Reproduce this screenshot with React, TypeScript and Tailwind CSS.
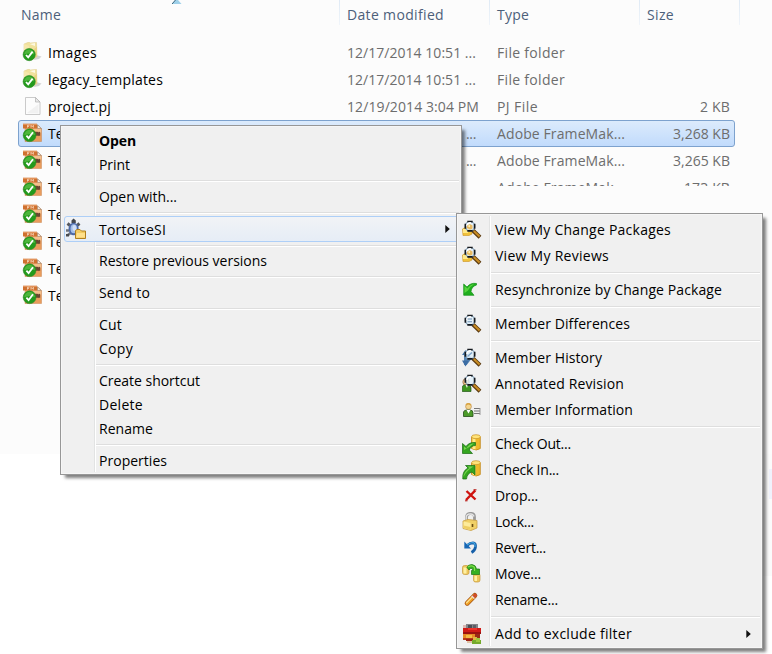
import { ReactNode, useLayoutEffect, useRef } from "react";

/* Text set to a given width by adjusting its tracking. */
function Label({ text, w, className = "" }: { text: string; w?: number; className?: string }) {
  const ref = useRef<HTMLSpanElement>(null);
  useLayoutEffect(() => {
    const el = ref.current;
    if (!el || !w) return;
    el.style.letterSpacing = "0px";
    const natural = el.getBoundingClientRect().width;
    el.style.letterSpacing = `${(w - natural) / text.length}px`;
  }, [text, w]);
  return (
    <span ref={ref} className={`inline-block whitespace-pre ${className}`}>
      {text}
    </span>
  );
}

function Check({ cx, cy, r }: { cx: number; cy: number; r: number }) {
  return (
    <g>
      <circle cx={cx} cy={cy} r={r} fill="#239a1c" stroke="#2b8a25" strokeWidth=".6" />
      <path d={`M${cx - r + 1} ${cy} a${r - 1} ${r - 1} 0 0 1 ${2 * r - 2} 0 q${-r + 1} -2 ${-2 * r + 2} 0z`} fill="#4db63c" />
      <path d={`M${cx - 3.2} ${cy + 0.4} L${cx - 1} ${cy + 2.8} L${cx + 3.4} ${cy - 3}`} fill="none" stroke="#fff" strokeWidth="1.8" />
    </g>
  );
}

function FolderIcon() {
  return (
    <svg width="20" height="20" viewBox="0 0 20 20">
      <path d="M14 13 L19.500 14.500 L17 17 L12 18z" fill="#d3d3d3" />
      <path d="M2 2 L7 0 L8 1 L14.500 .5 L15 14.500 L9 18 L2 14z" fill="#f1e19d" stroke="#dccb86" strokeWidth=".5" />
      <path d="M2 2 L7 4 V18 L2 14z" fill="#f6e7ab" />
      <path d="M7.500 2 L13 1 V4z" fill="#fdf9e2" />
      <path d="M11 8 L15 4.500 V14.500 L10 18z" fill="#e8d384" />
      <Check cx={7.2} cy={12.6} r={6.1} />
    </svg>
  );
}

function PageIcon() {
  return (
    <svg width="20" height="20" viewBox="0 0 20 20">
      <path d="M3.500 1.500 H13.500 L18 6 V18.500 H3.500z" fill="#fcfcfc" stroke="#bcbcbc" strokeWidth=".8" />
      <path d="M5 17 L16.500 8 V17.500z" fill="#f1f1f1" />
      <path d="M13.500 1.500 V6 H18z" fill="#e8e8e8" stroke="#b0b0b0" strokeWidth=".7" />
    </svg>
  );
}

function FrameIcon() {
  return (
    <svg width="20" height="20" viewBox="0 0 20 20">
      <path d="M3 2 H15.500 L19.500 5.500 V18.500 H3z" fill="#e99c5c" stroke="#bd733b" strokeWidth=".4" />
      <path d="M3.500 5.500 H19 V9.500 L10 14 H3.500z" fill="#f5bf8b" />
      <path d="M15.500 1.800 V5.500 H19.300z" fill="#f8eadb" stroke="#8c7561" strokeWidth=".5" />
      <path d="M1 .8 H15 V5.500 H1z" fill="#cf7130" />
      <path d="M1 .8 H15 V2 H1z" fill="#e2935a" />
      <path d="M5.500 4.600 V2.200 H7.500 M5.500 3.400 H7 M9 4.600 V2.300 L10.200 3.700 L11.400 2.300 V4.600" stroke="#fbdcc0" strokeWidth=".8" fill="none" />
      <path d="M13 12.800 V9.500 H14.500 V12.800 M15.500 12.800 V9 L16.500 11.500 L17.500 9 V12.800" stroke="#6b4630" strokeWidth="1.300" fill="none" />
      <Check cx={7.600} cy={12.200} r={6.400} />
    </svg>
  );
}

function TurtleIcon() {
  return (
    <svg width="22" height="22" viewBox="0 0 22 22">
      <path d="M2.500 5.500 L5 7.500 M14.500 5.500 L12 7.500" stroke="#55585e" strokeWidth="3" />
      <path d="M1 12.500 H4 M3 17 L5.500 15" stroke="#70747c" strokeWidth="2.600" />
      <path d="M6.500 2.500 L8.600 .5 L10.800 2.500 V5 H6.500z" fill="#44474c" />
      <ellipse cx="8.600" cy="11" rx="5" ry="6.300" fill="#4b68a6" />
      <ellipse cx="8.800" cy="10.800" rx="3.300" ry="4.500" fill="#a2bee9" />
      <ellipse cx="9.300" cy="10" rx="1.800" ry="3" fill="#d2e0f6" />
      <rect x="1" y="16" width="3" height="2.500" fill="#484b50" />
      <path d="M10.500 20.500 V12.500 L12 11.500 H15 L16.500 13 H20.500 V20.500z" fill="#f2cb61" stroke="#b07f1e" />
      <path d="M11 19.500 L12 15 H20 V19.500z" fill="#ffe08b" />
    </svg>
  );
}

function Lens() {
  return (
    <g>
      <path d="M11 10.500 L18 17.200" stroke="#5b3a10" strokeWidth="4" />
      <path d="M11.800 11 L17.600 16.500" stroke="#c98d24" strokeWidth="2" />
      <circle cx="8" cy="6.300" r="4.800" fill="#dff0fa" fillOpacity=".78" stroke="#8cabc4" strokeWidth="1.200" />
      <path d="M5.300 1.700 H10.700 M12.600 3.800 V8.800 M10.700 10.900 H5.300 M3.400 8.800 V3.800" fill="none" stroke="#15191e" strokeWidth="1.700" />
      <path d="M5 6 A3 3 0 0 1 9 3" stroke="#fff" strokeWidth="1.500" fill="none" />
    </g>
  );
}

const Svg = ({ children }: { children: ReactNode }) => (
  <svg width="20" height="20" viewBox="0 0 20 20">
    {children}
  </svg>
);

function PackagesIcon() {
  return (
    <Svg>
      <path d="M.5 9 L3 7.500 H9 L10 10 V14 L7 15.500 H1z" fill="#f0c13a" stroke="#d09c30" strokeWidth=".7" />
      <path d="M1 9 H6 V13 H1z" fill="#ffe887" />
      <Lens />
      <path d="M5 5.500 L8 4 L10.500 5.500 V8.500 L8 9.500 L5 8z" fill="#ecaa34" fillOpacity=".75" />
      <path d="M5.500 6 L8 4.800 V7.500z" fill="#fff2b2" />
    </Svg>
  );
}

function DiffIcon() {
  return (
    <Svg>
      <Lens />
      <path d="M5.500 5 H10 M5.500 7.800 H10" stroke="#7192b4" strokeWidth="1.100" />
    </Svg>
  );
}

function HistoryIcon() {
  return (
    <Svg>
      <path d="M3.500 5 V17 M3.500 16 L9 9" stroke="#5786b5" strokeWidth="3" fill="none" />
      <path d="M0 7 L3.500 2 L6 7z" fill="#4778ab" />
      <path d="M0 12.500 L3.500 18.500 L7 12.500z" fill="#3c6da4" />
      <Lens />
      <path d="M5.500 8.500 L10 4.500" stroke="#7da4ca" strokeWidth="1.500" />
    </Svg>
  );
}

function AnnotatedIcon() {
  return (
    <Svg>
      <circle cx="4" cy="8" r="3.200" fill="#efc28a" stroke="#79502d" strokeWidth=".6" />
      <path d="M.3 17.500 V13 Q.5 11 3 11 H6 Q9 11 9 14 V17.500z" fill="#3d941f" stroke="#235815" strokeWidth=".7" />
      <path d="M3.500 11 L5 14 L6 11z" fill="#eef5e8" />
      <Lens />
    </Svg>
  );
}

function InfoIcon() {
  return (
    <Svg>
      <circle cx="6.500" cy="6.500" r="2.900" fill="#f4d58e" stroke="#bd8d4f" strokeWidth=".7" />
      <path d="M4 5 Q6 2.500 9 5" stroke="#d8a342" strokeWidth="1.300" fill="none" />
      <path d="M1.500 16.500 V12 Q2 10 5 10 H8 Q11 10 11 13 V16.500z" fill="#4c9b2a" stroke="#244e18" strokeWidth=".8" />
      <path d="M4.500 10 L6.500 13.500 L8.500 10z" fill="#fff" />
      <path d="M12 8.500 H18 M12 11 H18 M12 13.500 H18" stroke="#777" strokeWidth="1.200" />
      <path d="M18 8 V15" stroke="#999" strokeWidth="1" />
    </Svg>
  );
}

const Cylinder = () => (
  <g>
    <path d="M9.500 3 V14.500 Q14.500 17.500 18.300 14.500 V3z" fill="#efb92b" stroke="#c0861d" strokeWidth=".8" />
    <path d="M10.500 3 H13.500 V15.500 L10.500 14.800z" fill="#ffe98a" />
    <ellipse cx="14" cy="2.700" rx="4.400" ry="2" fill="#ffe37a" stroke="#c98f1c" strokeWidth=".7" />
  </g>
);

function CheckOutIcon() {
  return (
    <Svg>
      <Cylinder />
      <path d="M13.500 8.500 Q7 8 4 12.500 L.5 9.500 V19.500 H10.500 L7.300 16 Q9 11.500 13.500 11.500z" fill="#34a51f" stroke="#176b10" strokeWidth=".7" />
      <path d="M12 9.200 Q7 9.500 4.500 14.500 L2 12.500 V16 Q7 14 12 9.200z" fill="#76d44d" />
    </Svg>
  );
}

function CheckInIcon() {
  return (
    <Svg>
      <Cylinder />
      <path d="M.8 19 Q0 11 6 8 L3.500 5.500 H13 V15 L10 12 Q5 13.500 4.500 19z" fill="#34a51f" stroke="#176b10" strokeWidth=".7" />
      <path d="M1.500 17 Q1.500 12 7.500 8 L5.500 6.500 H11.500 Q4 11 1.500 17z" fill="#76d44d" />
    </Svg>
  );
}

function ResyncIcon() {
  return (
    <Svg>
      <path d="M14.500 3.500 Q8.500 2.500 5 7 L1.700 4 V15.300 H12 L9 11.500 Q9.500 6.500 14.500 5z" fill="#1fae1e" stroke="#149018" strokeWidth=".7" />
      <path d="M2.500 6 L5.500 8.500 Q8 4.500 12 4.300 Q8 6.500 6 10.500 L2.500 13z" fill="#58d43e" />
    </Svg>
  );
}

function DropIcon() {
  return (
    <Svg>
      <path d="M4.500 5 L13.500 13.500 M13.300 4.300 L4 14" stroke="#cf1410" strokeWidth="2.400" />
      <path d="M11.500 3.800 H14.500 M3 14.800 H5.500" stroke="#b5100c" strokeWidth="1" />
    </Svg>
  );
}

function LockIcon() {
  return (
    <Svg>
      <path d="M4.500 11 V5 Q4.700 1.500 8.700 1.300 Q12.500 1.500 12.500 5 V11" stroke="#999" strokeWidth="2.800" fill="none" />
      <path d="M4.200 10 V5 Q4.500 2 8.500 1.800 Q11.500 2 12 4.500" stroke="#e6e6e6" strokeWidth="1.300" fill="none" />
      <path d="M1 9 L6 7.500 L15 8.500 V16 L9 18.500 L1 16.500z" fill="#f0d066" stroke="#c9a047" strokeWidth=".8" />
      <path d="M1.500 9.500 L8.500 11 V18 L1.500 16z" fill="#fdeb9b" />
      <path d="M1.500 13.500 L8.500 15 V18 L1.500 16z" fill="#efce62" />
      <path d="M10.500 12 V15" stroke="#6b4d15" strokeWidth="1.600" />
    </Svg>
  );
}

function RevertIcon() {
  return (
    <Svg>
      <path d="M2.300 3.500 V10.500 H9z" fill="#1767b6" />
      <path d="M5 7.500 Q8 4.800 11 4.800 Q14 5 13.500 9 Q13 12.500 9.500 14.500" stroke="#1760a9" strokeWidth="2.700" fill="none" />
      <path d="M5 7 Q8 4.500 11 4.500 Q13.500 5 13 9" stroke="#48a9e4" strokeWidth="1.100" fill="none" />
    </Svg>
  );
}

function MoveIcon() {
  return (
    <Svg>
      <rect x=".5" y="1.500" width="6.500" height="9" rx="2" fill="#edc65b" stroke="#c79a3a" strokeWidth=".7" />
      <path d="M1.500 3.500 H4.500 V9.500 H1.500z" fill="#fff0a2" />
      <rect x="11.500" y="9.500" width="6.500" height="8.500" rx="2" fill="#edc65b" stroke="#c79a3a" strokeWidth=".7" />
      <path d="M12.500 12 H15 V17 H12.500z" fill="#fff0a2" />
      <path d="M5 3.500 Q6 .5 10 .5 Q14 1 14.500 5 H17.500 V10.500 H9.500 V6.500 H11 Q10.500 3.500 8.500 4.500 L7 6z" fill="#35b020" stroke="#187411" strokeWidth=".7" />
      <path d="M6 3 Q10 .5 12.500 3.500 V7" stroke="#83de4c" strokeWidth="1.200" fill="none" />
    </Svg>
  );
}

function RenameIcon() {
  return (
    <Svg>
      <path d="M5.200 13.200 L12.800 5.500" stroke="#a85512" strokeWidth="5" strokeLinecap="round" />
      <path d="M5.200 13.200 L12.800 5.500" stroke="#efa026" strokeWidth="3.400" strokeLinecap="round" />
      <path d="M4.600 12.700 L10.500 6.800" stroke="#ffe08b" strokeWidth="1.400" strokeLinecap="round" />
      <path d="M12.500 6 L13.300 5.300" stroke="#cf4a2c" strokeWidth="3.200" strokeLinecap="round" />
      <path d="M9.700 5.800 L12.400 8.700" stroke="#e8dde6" strokeWidth="1.200" />
    </Svg>
  );
}

function ExcludeIcon() {
  return (
    <svg width="20" height="20" viewBox="0 0 20 20" shapeRendering="crispEdges">
      <rect x="4" y="0" width="12" height="5" fill="#85858a" />
      <rect x="6" y="1" width="4" height="3" fill="#4b4e55" />
      <rect x="11" y="1" width="3" height="3" fill="#5c5f66" />
      <rect x="1" y="1" width="3" height="4" fill="#d9b8b2" />
      <rect x="1" y="4" width="18" height="6" fill="#d01b17" />
      <rect x="6" y="4" width="9" height="2" fill="#ee332a" />
      <rect x="1" y="8" width="18" height="2" fill="#9b1210" />
      <rect x="1" y="10" width="12" height="4" fill="#e68b24" />
      <rect x="4" y="11" width="6" height="3" fill="#f2bb46" />
      <rect x="13" y="10" width="5" height="4" fill="#982b17" />
      <rect x="1" y="14" width="10" height="2" fill="#b83a1a" />
      <rect x="4" y="15" width="7" height="2" fill="#9d2012" />
      <rect x="11" y="13" width="4" height="4" fill="#e0b342" />
      <rect x="5" y="17" width="5" height="2" fill="#e0c3a6" />
      <rect x="10" y="16" width="9" height="4" fill="#75aa2c" />
      <rect x="14" y="14" width="4" height="4" fill="#9cc83d" />
    </svg>
  );
}

const Arrow = () => (
  <svg width="5" height="8" viewBox="0 0 5 8">
    <path d="M.3 0 L4.800 4 L.3 8z" fill="#111" />
  </svg>
);

type Entry = { text: string; w: number; icon?: ReactNode; bold?: boolean; arrow?: boolean } | null;

const mainMenu: Entry[] = [
  { text: "Open", w: 37, bold: true },
  { text: "Print", w: 31 },
  null,
  { text: "Open with...", w: 78 },
  null,
  { text: "TortoiseSI", w: 67, icon: <TurtleIcon />, arrow: true },
  null,
  { text: "Restore previous versions", w: 168 },
  null,
  { text: "Send to", w: 51 },
  null,
  { text: "Cut", w: 23 },
  { text: "Copy", w: 34 },
  null,
  { text: "Create shortcut", w: 101 },
  { text: "Delete", w: 44 },
  { text: "Rename", w: 54 },
  null,
  { text: "Properties", w: 68 },
];

const subMenu: Entry[] = [
  { text: "View My Change Packages", w: 176, icon: <PackagesIcon /> },
  { text: "View My Reviews", w: 114, icon: <PackagesIcon /> },
  null,
  { text: "Resynchronize by Change Package", w: 227, icon: <ResyncIcon /> },
  null,
  { text: "Member Differences", w: 135, icon: <DiffIcon /> },
  null,
  { text: "Member History", w: 107, icon: <HistoryIcon /> },
  { text: "Annotated Revision", w: 129, icon: <AnnotatedIcon /> },
  { text: "Member Information", w: 138, icon: <InfoIcon /> },
  null,
  { text: "Check Out...", w: 76, icon: <CheckOutIcon /> },
  { text: "Check In...", w: 64, icon: <CheckInIcon /> },
  { text: "Drop...", w: 43, icon: <DropIcon /> },
  { text: "Lock...", w: 39, icon: <LockIcon /> },
  { text: "Revert...", w: 51, icon: <RevertIcon /> },
  { text: "Move...", w: 46, icon: <MoveIcon /> },
  { text: "Rename...", w: 63, icon: <RenameIcon /> },
  null,
  { text: "Add to exclude filter", w: 137, icon: <ExcludeIcon />, arrow: true },
];

const Separator = ({ className }: { className: string }) => (
  <div className={`flex items-center pr-0.5 ${className}`}>
    <div className="h-0.5 w-full border-t border-b border-t-[#dedede] border-b-white" />
  </div>
);

function MainMenu() {
  return (
    <div className="absolute left-[60px] top-[125px] w-[402px] h-[350px] border border-[#979797] bg-[#f0f0f0] shadow-[inset_0_0_0_1px_#f6f6f6,4px_4px_3px_-1px_rgba(0,0,0,0.5)]">
      <div className="flex h-full pt-[3px]">
        <div className="-mt-px mb-0.5 ml-0.5 w-[33px] border-r border-white">
          <div className="h-full border-r border-[#e2e3e3]" />
        </div>
        <div className="flex-1">
          {mainMenu.map((m, i) => {
            if (!m) return <Separator key={i} className={i === 4 || i === 6 ? "h-[7px]" : "h-2"} />;
            if (m.arrow)
              return (
                <div key={i} className="-ml-[32px] mr-0.5 flex h-[26px] items-center rounded-[3px] border border-[#aecff7] bg-linear-to-b from-[#f1f3f6] to-[#e6edf6]">
                  <div className="flex w-[34px]">{m.icon}</div>
                  <Label text={m.text} w={m.w} className="pt-px" />
                  <div className="ml-auto mr-[8px]">
                    <Arrow />
                  </div>
                </div>
              );
            return (
              <div key={i} className="flex h-6 items-center pl-[3px]">
                <Label text={m.text} w={m.w} className={m.bold ? "font-bold" : ""} />
              </div>
            );
          })}
        </div>
      </div>
    </div>
  );
}

function SubMenu() {
  return (
    <div className="absolute left-[456px] top-[213px] w-[307px] h-[436px] border border-[#979797] bg-[#f0f0f0] shadow-[inset_0_0_0_1px_#f6f6f6,4px_4px_3px_-1px_rgba(0,0,0,0.5)]">
      <div className="flex h-full pt-[3px]">
        <div className="-mt-px mb-0.5 ml-0.5 w-[32px] border-r border-white">
          <div className="h-full border-r border-[#e2e3e3]" />
        </div>
        <div className="flex-1">
          {subMenu.map((m, i) =>
            m ? (
              <div key={i} className="-ml-[29px] flex h-[26px] items-center">
                <div className="flex w-[33px]">{m.icon}</div>
                <Label text={m.text} w={m.w} />
                {m.arrow && (
                  <div className="ml-auto mr-[11px]">
                    <Arrow />
                  </div>
                )}
              </div>
            ) : (
              <Separator key={i} className="h-2" />
            ),
          )}
        </div>
      </div>
    </div>
  );
}

type FileRow = { icon: ReactNode; name: string; nw?: number; date?: string; dw?: number; type?: string; tw?: number; size?: string; sw?: number; state?: string };

const fm = { icon: <FrameIcon />, name: "Te" };
const files: FileRow[] = [
  { icon: <FolderIcon />, name: "Images", nw: 49, date: "12/17/2014 10:51 ...", dw: 129, type: "File folder", tw: 68 },
  { icon: <FolderIcon />, name: "legacy_templates", nw: 115, date: "12/17/2014 10:51 ...", dw: 129, type: "File folder", tw: 68 },
  { icon: <PageIcon />, name: "project.pj", nw: 63, date: "12/19/2014 3:04 PM", dw: 132, type: "PJ File", tw: 41, size: "2 KB", sw: 30 },
  { ...fm, date: "...", dw: 10, type: "Adobe FrameMak...", tw: 128, size: "3,268 KB", sw: 57, state: "selected" },
  { ...fm, date: "...", dw: 10, type: "Adobe FrameMak...", tw: 128, size: "3,265 KB", sw: 57 },
  { ...fm, type: "Adobe FrameMak...", tw: 128, size: "173 KB", sw: 46, state: "cut" },
  fm,
  fm,
  fm,
  fm,
];

function Row({ f }: { f: FileRow }) {
  const look = f.state === "selected" ? "border-[#7da2ce] bg-linear-to-b from-[#dcebfc] to-[#c1dbfc]" : "border-transparent";
  const clip = f.state === "cut" ? "h-[11px] overflow-hidden" : "h-[25px]";
  return (
    <div className={`flex h-[27px] w-[717px] rounded-[3px] border ${look}`}>
      <div className="w-[29px] pl-[3px] pt-0.5">{f.icon}</div>
      <div className="w-[299px] leading-[25px]">
        <Label text={f.name} w={f.nw} />
      </div>
      <div className={`flex leading-[25px] text-[#6d6d6d] ${clip}`}>
        <div className={`w-[150px] ${f.date === "..." ? "pl-[119px]" : ""}`}>{f.date && <Label text={f.date} w={f.dw} />}</div>
        <div className="w-[150px]">{f.type && <Label text={f.type} w={f.tw} />}</div>
        <div className="w-[83px] text-right">{f.size && <Label text={f.size} w={f.sw} />}</div>
      </div>
    </div>
  );
}

const columns = [
  { t: "Name", w: 40, c: "w-[340px] pl-[21px]" },
  { t: "Date modified", w: 97, c: "w-[150px] pl-[7px]" },
  { t: "Type", w: 32, c: "w-[150px] pl-[7px]" },
  { t: "Size", w: 27, c: "w-[100px] pl-[7px]" },
];

export default function App() {
  return (
    <div className="relative h-[654px] w-[772px] overflow-hidden bg-white font-['Open_Sans','Noto_Sans',sans-serif] text-[14px] leading-5 text-black">
      <div className="h-[454px] bg-[#fcfcfc]">
        <div className="flex h-[39px] text-[#4c607a]">
          {columns.map((c) => (
            <div key={c.t} className={`relative h-[25px] pt-[5px] ${c.c}`}>
              <Label text={c.t} w={c.w} />
              <div className="absolute right-0 top-0 h-[25px] w-px bg-linear-to-b from-[#dfeaf5] to-[#f0f5fa]" />
            </div>
          ))}
        </div>
        <svg className="absolute left-[172px] top-0" width="10" height="4" viewBox="0 0 10 4">
          <path d="M0 4 L3.500 0 H6 L9.500 4z" fill="#9ed0e9" />
          <path d="M0 4 L3.500 0" stroke="#39627a" strokeWidth="1" />
        </svg>
        <div className="pl-[18px]">
          {files.map((f, i) => (
            <Row key={i} f={f} />
          ))}
        </div>
      </div>
      <div className="ml-auto h-[122px] w-[9px] bg-[#fbfbfb] pt-[15px]">
        <div className="ml-auto h-[30px] w-[3px] bg-[#f0f2fc]" />
      </div>
      <MainMenu />
      <SubMenu />
    </div>
  );
}
